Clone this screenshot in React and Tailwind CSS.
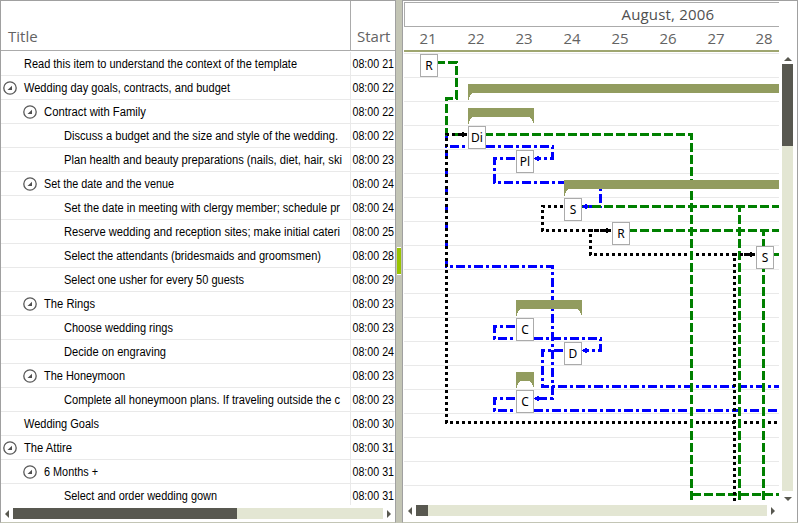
const rows = [
  { level: 0, text: 'Read this item to understand the context of the template', start: '08:00 21', width: 273 },
  { level: 0, text: 'Wedding day goals, contracts, and budget', start: '08:00 22', open: true, width: 206 },
  { level: 1, text: 'Contract with Family', start: '08:00 22', open: true, width: 102 },
  { level: 2, text: 'Discuss a budget and the size and style of the wedding.', start: '08:00 22', width: 274 },
  { level: 2, text: 'Plan health and beauty preparations (nails, diet, hair, ski', start: '08:00 23', width: 278 },
  { level: 1, text: 'Set the date and the venue', start: '08:00 24', open: true, width: 130 },
  { level: 2, text: 'Set the date in meeting with clergy member; schedule pr', start: '08:00 24', width: 276 },
  { level: 2, text: 'Reserve wedding and reception sites; make initial cateri', start: '08:00 25', width: 276 },
  { level: 2, text: 'Select the attendants (bridesmaids and groomsmen)', start: '08:00 28', width: 257 },
  { level: 2, text: 'Select one usher for every 50 guests', start: '08:00 29', width: 180 },
  { level: 1, text: 'The Rings', start: '08:00 23', open: true, width: 51 },
  { level: 2, text: 'Choose wedding rings', start: '08:00 23', width: 109 },
  { level: 2, text: 'Decide on engraving', start: '08:00 24', width: 102 },
  { level: 1, text: 'The Honeymoon', start: '08:00 23', open: true, width: 81 },
  { level: 2, text: 'Complete all honeymoon plans. If traveling outside the c', start: '08:00 23', width: 276 },
  { level: 0, text: 'Wedding Goals', start: '08:00 30', width: 75 },
  { level: 0, text: 'The Attire', start: '08:00 31', open: true, width: 48 },
  { level: 1, text: '6 Months +', start: '08:00 31', open: true, width: 54 },
  { level: 2, text: 'Select and order wedding gown', start: '08:00 31', width: 153 },
];

const indent = ['pl-[2px]', 'pl-[22px]', 'pl-[42px]'];

function Toggle() {
  return (
    <svg className="size-[14px] shrink-0" viewBox="0 0 14 14">
      <circle cx="7" cy="7" r="6.2" fill="#fff" stroke="#585858" strokeWidth="1.3" />
      <path d="M4.5 9H9V4.8Z" fill="#505050" />
    </svg>
  );
}

function Arrow({ dir }) {
  const paths = {
    left: 'M4 0V8L0 4Z',
    right: 'M0 0V8L4 4Z',
    up: 'M0 4H8L4 0Z',
    down: 'M0 0H8L4 4Z',
  };
  const tall = dir === 'left' || dir === 'right';
  return (
    <svg className={tall ? 'h-2 w-1' : 'h-1 w-2'} viewBox={tall ? '0 0 4 8' : '0 0 8 4'}>
      <path d={paths[dir]} fill="#585850" />
    </svg>
  );
}

function TreeRow({ row }) {
  return (
    <div className="flex h-6 shrink-0 border-b border-[#e9e9e9]">
      <div className={'flex w-[350px] shrink-0 items-center border-r border-[#e9e9e9] ' + indent[row.level]}>
        <div className="flex w-[21px] shrink-0 items-center">{row.open && <Toggle />}</div>
        <svg className="h-[23px] w-[280px] shrink-0 overflow-visible">
          <text x="0" y="16" textLength={row.width} lengthAdjust="spacingAndGlyphs" className="fill-black text-[12px]">{row.text}</text>
        </svg>
      </div>
      <svg className="ml-px h-[23px] w-[42px] shrink-0 overflow-visible">
        <text x="0.5" y="16" textLength="41.5" lengthAdjust="spacingAndGlyphs" className="fill-black text-[12px]">{row.start}</text>
      </svg>
    </div>
  );
}

const dashes = { g: '9 3', k: '3 3', b: '9 3 3 3' };
const colors = { g: '#008000', k: '#000000', b: '#0000ff' };

// The chart's view box starts at (404, 53); links, bars and nodes share that space.
const links = [
  ['b', '467,134.5 446.5,134.5 446.5,146.5 552.5,146.5 552.5,158.5 535,158.5'],
  ['b', '467,134.5 446.5,134.5 446.5,266.5 552.5,266.5 552.5,398.5 535,398.5'],
  ['b', '515,158.5 494.5,158.5 494.5,182.5 600.5,182.5 600.5,206.5 583,206.5'],
  ['b', '515,326.5 494.5,326.5 494.5,338.5 600.5,338.5 600.5,350.5 583,350.5'],
  ['b', '563,350.5 542.5,350.5 542.5,386.5 779,386.5'],
  ['b', '515,398.5 494.5,398.5 494.5,410.5 779,410.5'],
  ['g', '436,62.5 456.5,62.5 456.5,98.5 446.5,98.5 446.5,134.5 467,134.5'],
  ['k', '467,134.5 446.5,134.5 446.5,422.5 779,422.5'],
  ['k', '563,206.5 542.5,206.5 542.5,230.5 611,230.5'],
  ['k', '611,230.5 590.5,230.5 590.5,254.5 755,254.5'],
  ['g', '484,134.5 691.5,134.5 691.5,500'],
  ['g', '691.5,494.5 779,494.5'],
  ['g', '580,206.5 779,206.5'],
  ['g', '580,206.5 739.5,206.5 739.5,500'],
  ['g', '628,230.5 779,230.5'],
  ['g', '628,230.5 763.5,230.5 763.5,500'],
  ['g', '772,254.5 779,254.5'],
  ['k', '755,254.5 734.5,254.5 734.5,501'],
];

const heads = [
  ['k', 467, 134.5, 1],
  ['b', 534, 158.5, -1],
  ['b', 582, 206.5, -1],
  ['k', 611, 230.5, 1],
  ['k', 755, 254.5, 1],
  ['b', 582, 350.5, -1],
  ['b', 534, 398.5, -1],
];

const bars = [
  [468, 84, 779],
  [468, 108, 534],
  [564, 180, 779],
  [516, 300, 582],
  [516, 372, 534],
];

const nodes = [
  ['R', 420, 54],
  ['Di', 468, 126],
  ['Pl', 516, 150],
  ['S', 564, 198],
  ['R', 612, 222],
  ['S', 756, 246],
  ['C', 516, 318],
  ['D', 564, 342],
  ['C', 516, 390],
];

function barPath([x, y, end]) {
  const left = `M${x} ${y}H${end}`;
  const right = end === 779 ? 'V' + (y + 9) : `V${y + 15}h-1v-2h-1v-2h-1v-1h-1v-1`;
  return `${left}${right}H${x + 4}v1h-1v1h-1v2h-1v3h-1Z`;
}

function Chart() {
  return (
    <div className="relative h-[448px] w-[375px] overflow-hidden">
      <div className="flex flex-col">
        {rows.map((row, i) => (
          <div key={i} className="h-6 border-t border-[#e9e9e9]" />
        ))}
      </div>
      <svg className="absolute inset-0 h-[448px] w-[375px]" viewBox="404 53 375 448" shapeRendering="crispEdges">
        {links.map(([kind, points], i) => (
          <polyline key={i} points={points} fill="none" stroke={colors[kind]} strokeWidth="3" strokeDasharray={dashes[kind]} />
        ))}
        {heads.map(([kind, x, y, d], i) => (
          <path
            key={i}
            d={`M${x - 6 * d} ${y - 1.5}h${d}v-1h${2 * d}v1h${2 * d}v1h${d}v1h${-d}v1h${-2 * d}v1h${-2 * d}v-1h${-d}Z`}
            fill={colors[kind]}
          />
        ))}
        {bars.map((bar, i) => (
          <path key={i} d={barPath(bar)} fill="#929c5f" />
        ))}
      </svg>
      {nodes.map(([label, x, y], i) => (
        <div
          key={i}
          className="absolute flex h-[23px] w-[18px] items-center justify-center border border-[#ababab] bg-white font-['Noto_Sans',sans-serif] text-[12px] text-black"
          style={{ left: x - 404, top: y - 53 }}
        >
          {label}
        </div>
      ))}
    </div>
  );
}

export default function App() {
  return (
    <div className="flex h-[523px] w-[798px] overflow-hidden bg-white font-['Liberation_Sans',sans-serif]">
      <div className="flex w-[396px] shrink-0 flex-col border border-[#a0a0a0] border-b-[#c3c5b5]">
        <div className="flex h-[50px] shrink-0 border-b border-[#ababab] font-['Open_Sans','Noto_Sans',sans-serif] text-[15px] leading-5 text-[#636363]">
          <div className="flex w-[350px] shrink-0 items-end border-r border-[#ababab] pb-[4px] pl-[7px]">Title</div>
          <div className="flex items-end pb-[4px] pl-[6px]">Start</div>
        </div>
        <div className="mt-px flex h-[453px] shrink-0 flex-col overflow-hidden">
          {rows.map((row, i) => (
            <TreeRow key={i} row={row} />
          ))}
        </div>
        <div className="mt-[3px] flex h-[11px] items-center">
          <div className="flex w-3 pl-1"><Arrow dir="left" /></div>
          <div className="h-[11px] w-[224px] bg-[#585850]" />
          <div className="h-[11px] w-[146px] bg-[#e3e6d3]" />
          <div className="flex w-3 justify-center"><Arrow dir="right" /></div>
        </div>
      </div>
      <div className="flex w-[6px] shrink-0 flex-col bg-[#c3c5b5] pt-[247px] pl-px">
        <div className="h-7 w-1 border-y border-white bg-[#99c400]" />
      </div>
      <div className="flex w-[396px] shrink-0 flex-col border border-[#a0a0a0] border-b-[#c3c5b5] pl-px">
        <div className="mt-px flex h-[25px] w-[375px] shrink-0 items-center border border-r-0 border-[#ababab] font-['Open_Sans','Noto_Sans',sans-serif] text-[15px]">
          <svg className="h-[23px] w-[374px]">
            <text x="216.5" y="17" textLength="92.5" className="fill-[#505050]">August, 2006</text>
          </svg>
        </div>
        <div className="flex h-[25px] w-[375px] shrink-0 border-b-2 border-[#9fa670] font-['Open_Sans','Noto_Sans',sans-serif] text-[15px] leading-[23px] text-[#636363]">
          {[21, 22, 23, 24, 25, 26, 27, 28].map((day) => (
            <div key={day} className="w-12 shrink-0 text-center">{day}</div>
          ))}
        </div>
        <div className="flex pt-px">
          <Chart />
          <div className="ml-[3px] flex w-[11px] flex-col items-center">
            <div className="flex h-[11px] items-center"><Arrow dir="up" /></div>
            <div className="h-[82px] w-[11px] bg-[#585850]" />
            <div className="h-[345px] w-[11px] bg-[#e3e6d3]" />
            <div className="flex h-[10px] items-end"><Arrow dir="down" /></div>
          </div>
        </div>
        <div className="mt-1 flex h-[11px] items-center">
          <div className="flex w-3 justify-center"><Arrow dir="left" /></div>
          <div className="h-[11px] w-3 bg-[#585850]" />
          <div className="h-[11px] w-[339px] bg-[#e3e6d3]" />
          <div className="flex w-3 justify-center"><Arrow dir="right" /></div>
        </div>
      </div>
    </div>
  );
}
